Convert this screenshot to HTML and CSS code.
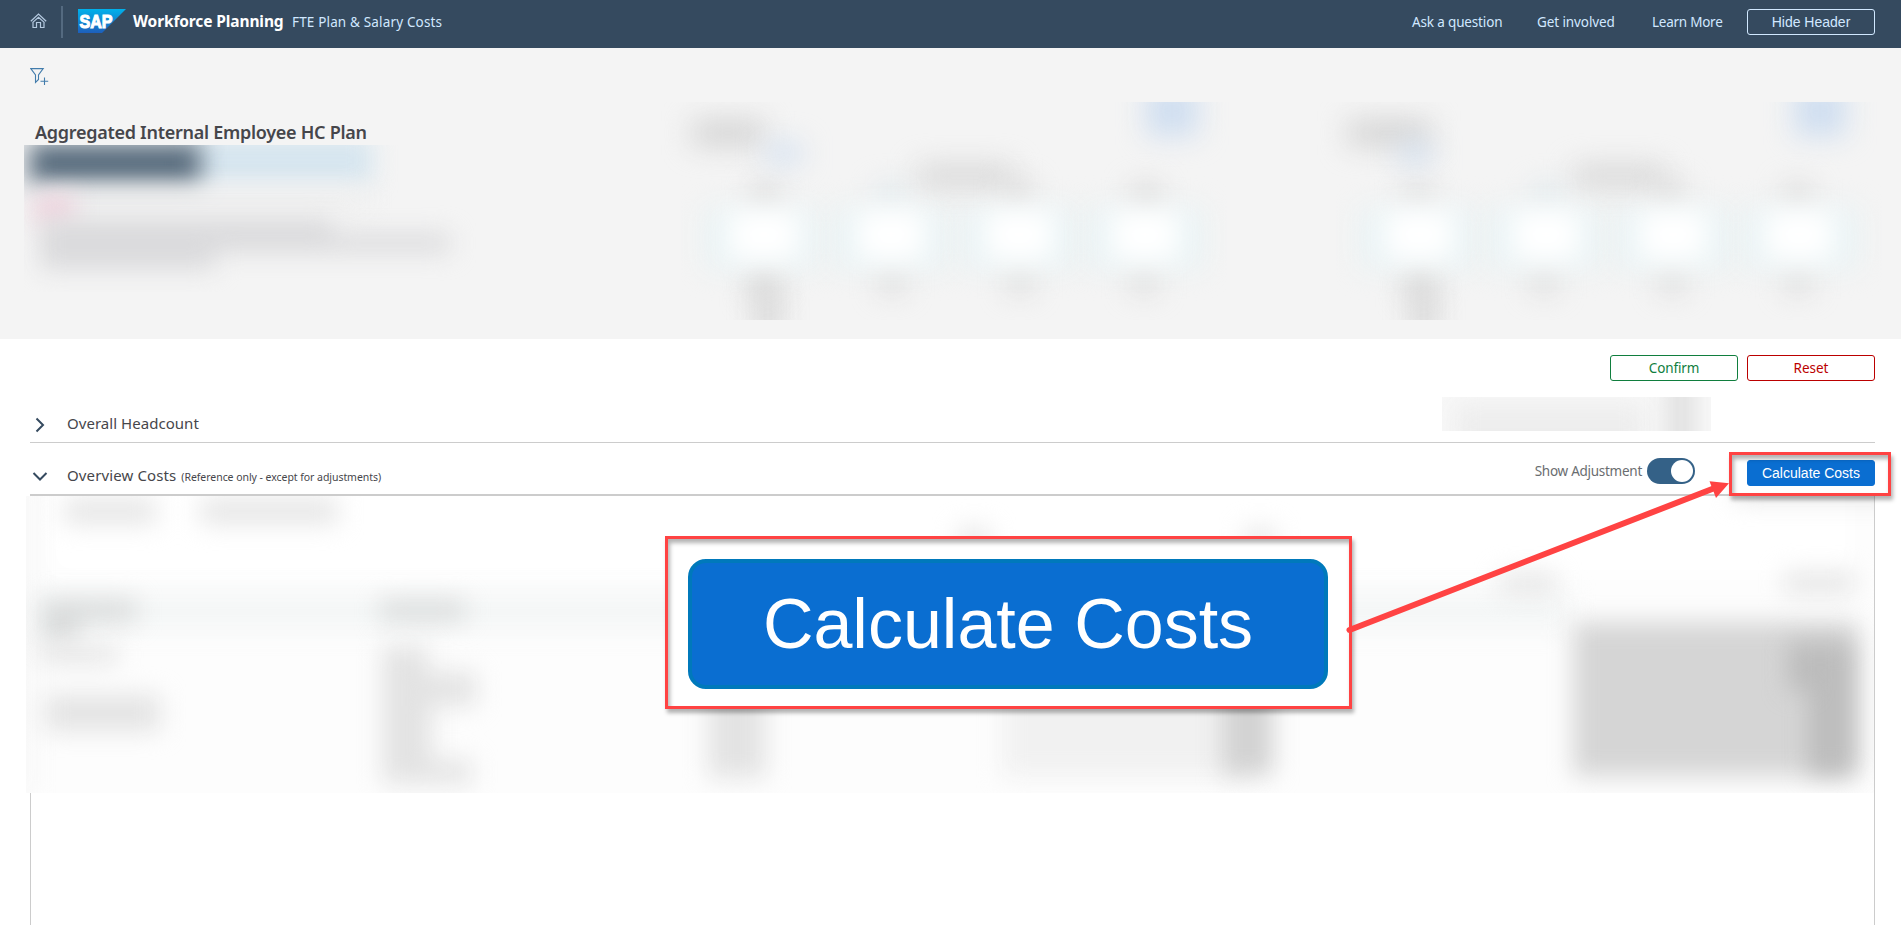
FILE: index.html
```html
<!DOCTYPE html>
<html lang="en">
<head>
<meta charset="utf-8">
<title>Workforce Planning</title>
<link rel="stylesheet" href="styles.css">
</head>
<body>
<header class="shell">
  <svg class="home" width="18" height="16" viewBox="0 0 18 16" fill="none" stroke="#b5cae0" stroke-width="1.2"><path d="M.8 8.200 8.500 1 16.200 8.200M2.500 9.600 8.500 4.300 14.500 9.600M3 9.500V14.500H6.500V9.500H10.500V14.500H14V9.500"/></svg>
  <span class="divider"></span>
  <svg class="logo" width="48" height="24" viewBox="0 0 48 24">
    <defs><linearGradient id="sap" x1="0" y1="0" x2="0" y2="1"><stop offset="0" stop-color="#00b1eb"/><stop offset="1" stop-color="#1e5fbb"/></linearGradient></defs>
    <path fill="url(#sap)" d="M0 0H48L24 24H0z"/>
    <text class="logo-text" x="1.500" y="19" textLength="33" lengthAdjust="spacingAndGlyphs">SAP</text>
  </svg>
  <span class="product">Workforce Planning</span>
  <span class="page-name">FTE Plan &amp; Salary Costs</span>
  <nav class="links">
    <a class="link ask">Ask a question</a>
    <a class="link involved">Get involved</a>
    <a class="link learn">Learn More</a>
    <button class="btn btn-header">Hide Header</button>
  </nav>
</header>

<section class="summary">
  <svg class="filter" width="20" height="18" viewBox="0 0 20 18" fill="none" stroke="#427cac" stroke-width="1.1"><path d="M.8.600H13.200L8.500 7V11.500L5.500 14.500V7zM14.500 9.500V17M10.500 13.300H18.200"/></svg>
  <h1 class="heading">Aggregated Internal Employee HC Plan</h1>
  <div class="tiles">
    <svg class="tile tile-text" width="460" height="147" viewBox="24 145 460 147">
      <g class="soft">
        <rect x="190" y="138" width="182" height="44" fill="#d5e5ef"/>
        <rect x="29" y="143" width="172" height="41" fill="#566a7c"/>
        <rect x="36" y="190" width="330" height="20" fill="#efefef"/>
        <rect x="34" y="198" width="40" height="24" fill="#f0cedb"/>
        <path d="M40 219H332V234H450V252H215V269H40z" fill="#dadadc"/>
      </g>
    </svg>
    <svg class="tile tile-b" width="600" height="218" viewBox="660 102 600 218">
      <g class="soft softer">
        <g fill="#e8f3f5"><rect x="706" y="208" width="112" height="60"/><rect x="834" y="208" width="112" height="60"/><rect x="962" y="208" width="112" height="60"/><rect x="1088" y="208" width="114" height="60"/></g>
        <g fill="#d4d4d4"><rect x="692" y="120" width="72" height="26"/><rect x="752" y="186" width="26" height="20"/><rect x="918" y="166" width="94" height="20"/><rect x="1004" y="184" width="28" height="16"/><rect x="1132" y="186" width="28" height="20"/><rect x="750" y="272" width="28" height="26"/><rect x="757" y="290" width="22" height="50"/><rect x="880" y="274" width="24" height="17"/><rect x="1008" y="274" width="24" height="17"/><rect x="1132" y="274" width="24" height="17"/></g>
        <g fill="#d8e5ea"><rect x="876" y="186" width="30" height="16"/></g>
        <g fill="#cfdef0"><rect x="766" y="144" width="36" height="18"/><rect x="1146" y="86" width="52" height="50"/></g>
        <g fill="#fff"><rect x="728" y="208" width="72" height="54"/><rect x="856" y="208" width="70" height="54"/><rect x="984" y="208" width="70" height="54"/><rect x="1110" y="208" width="70" height="54"/></g>
      </g>
    </svg>
    <svg class="tile tile-c" width="601" height="218" viewBox="1300 102 601 218">
      <g class="soft softer">
        <g fill="#e8f3f5"><rect x="1361" y="208" width="112" height="60"/><rect x="1489" y="208" width="112" height="60"/><rect x="1617" y="208" width="112" height="60"/><rect x="1743" y="208" width="114" height="60"/></g>
        <g fill="#d4d4d4"><rect x="1348" y="120" width="82" height="26"/><rect x="1405" y="186" width="26" height="16"/><rect x="1574" y="166" width="90" height="20"/><rect x="1656" y="184" width="28" height="16"/><rect x="1784" y="186" width="28" height="17"/><rect x="1406" y="272" width="28" height="26"/><rect x="1413" y="290" width="22" height="50"/><rect x="1532" y="274" width="24" height="17"/><rect x="1660" y="274" width="24" height="17"/><rect x="1786" y="274" width="24" height="17"/></g>
        <g fill="#d8e5ea"><rect x="1532" y="186" width="30" height="16"/></g>
        <g fill="#cfdef0"><rect x="1398" y="144" width="34" height="18"/><rect x="1794" y="86" width="52" height="50"/></g>
        <g fill="#fff"><rect x="1384" y="208" width="70" height="54"/><rect x="1511" y="208" width="70" height="54"/><rect x="1638" y="208" width="70" height="54"/><rect x="1764" y="208" width="70" height="54"/></g>
      </g>
    </svg>
  </div>
</section>

<main class="content">
  <div class="actions">
    <button class="btn btn-confirm">Confirm</button>
    <button class="btn btn-reset">Reset</button>
  </div>
  <div class="panel-head overall">
    <svg class="chevron" width="16" height="16" viewBox="0 0 16 16" fill="none" stroke="#354a5f" stroke-width="2"><path d="M4.500 1.500 11 8 4.500 14.500"/></svg>
    <span class="panel-title overall-title">Overall Headcount</span>
    <svg class="masked" width="269" height="34" viewBox="1442 397 269 34">
      <path fill="#f8f8f8" d="M1442 397h269v34h-269z"/>
      <g class="soft"><path fill="#ededed" d="M1455 404H1645V455H1455z"/><path fill="#dadada" d="M1670 370H1692V460H1670z"/></g>
    </svg>
  </div>
  <div class="panel-head costs">
    <svg class="chevron" width="16" height="16" viewBox="0 0 16 16" fill="none" stroke="#354a5f" stroke-width="2"><path d="M1.500 5 8 11.500 14.500 5"/></svg>
    <span class="panel-title costs-title">Overview Costs</span>
    <span class="panel-note">(Reference only - except for adjustments)</span>
    <span class="toggle-label">Show Adjustment</span>
    <span class="toggle"><span class="knob"></span></span>
    <button class="btn btn-calc">Calculate Costs</button>
  </div>
  <div class="panel-body">
    <svg class="table-mask" width="1848" height="297" viewBox="26 496 1848 297">
      <path fill="#fdfdfd" d="M26 496h1848v297H26z"/>
      <g class="soft">
        <path fill="#fff" d="M50 470H1850V575H50z"/>
        <path fill="#f4f6f6" d="M30 594H1570V630H30z"/>
        <path fill="#f6f6f6" d="M10 480H30V793H10z"/>
        <path fill="#e6e6e6" d="M64 498H156V524H64zM200 498H338V524H200zM958 528H990V550H958zM1245 528H1275V550H1245zM1500 573H1556V594H1500zM1784 572H1854V594H1784z"/>
        <path fill="#d8dada" d="M42 600H136V621H78V642H42zM380 601H465V620H380z"/>
        <path fill="#e3e3e3" d="M40 646H118V663H40zM45 695H160V731H45zM382 646H428V672H476V706H432V760H472V784H382zM708 600H766V778H708z"/>
        <path fill="#f1f1f1" d="M1002 640H1250V777H1002z"/>
        <path fill="#d2d2d2" d="M1222 640H1273V775H1222z"/>
        <path fill="#e3e3e3" d="M1735 480H1900V500H1735z"/>
        <path fill="#d5d5d5" d="M1573 622H1858V776H1573z"/>
        <path fill="#bcbcbc" d="M1788 642H1852V774H1808V690H1788z"/>
      </g>
    </svg>
  </div>
</main>

<div class="mark mark-small"></div>
<div class="mark mark-large"><span class="callout">Calculate Costs</span></div>
<svg class="arrow" width="390" height="160" viewBox="1345 478 390 160"><path d="M1349.500 630 1716 487.500" stroke="#ff4343" stroke-width="6" stroke-linecap="round"/><path d="M1729 483.300 1709.500 481.300 1716 498z" fill="#ff4343"/></svg>
</body>
</html>
```
FILE: styles.css
```css
* { box-sizing: border-box; }
body {
  margin: 0;
  width: 1901px;
  height: 925px;
  overflow: hidden;
  position: relative;
  display: flex;
  flex-direction: column;
  background: #fff;
  color: #46464b;
  font-family: "Noto Sans", "Liberation Sans", sans-serif;
  font-size: 14px;
}
svg { display: block; flex: none; }
span, a { white-space: nowrap; }
.soft rect, .soft path { filter: blur(12px); }
.softer rect { filter: blur(14px); }

.shell {
  height: 48px;
  flex: none;
  display: flex;
  align-items: flex-start;
  padding: 0 26px 0 30px;
  background: #354a5f;
  color: #d1e8ff;
}
.home { margin-top: 13px; }
.divider { width: 2px; height: 32px; margin: 6px 15px 0 13px; background: #546a80; }
.logo { margin-top: 9px; }
.logo-text { fill: #fff; font: bold 19px "Liberation Sans", sans-serif; stroke: #fff; stroke-width: 1.1px; }
.product { width: 151px; margin: 0 8px 0 7px; color: #fff; font-size: 15.500px; font-weight: 700; line-height: 43px; letter-spacing: -.12px; }
.page-name { font-size: 13.500px; line-height: 44px; letter-spacing: .16px; }
.links { margin-left: auto; display: flex; }
.link { font-size: 13.500px; line-height: 44px; letter-spacing: -.15px; }
.involved.link { letter-spacing: -.1px; }
.learn.link { letter-spacing: -.25px; }
.ask { width: 125px; }
.involved { width: 115px; }
.learn { width: 95px; }

.btn {
  width: 128px;
  height: 26px;
  padding: 0;
  border: 1px solid;
  border-radius: 3px;
  background: #fff;
  font: 13.500px "Noto Sans", sans-serif;
  line-height: 23px;
}
.btn-header { margin-top: 9px; background: none; color: #d1e8ff; font: 14px "Liberation Sans", sans-serif; }

.summary { height: 291px; flex: none; background: #f4f4f4; }
.filter { margin: 20px 0 0 30px; }
.heading { height: 59px; margin: 0 0 0 35px; padding-top: 33px; font-size: 18px; font-weight: 600; line-height: 26px; letter-spacing: -.28px; }
.tiles { display: flex; height: 147px; margin-left: 24px; align-items: flex-start; }
.tile { overflow: hidden; }
.tile-b { margin: -43px 40px 0 176px; }
.tile-c { margin-top: -43px; }

.content { flex: 1; padding: 16px 26px 0 30px; display: flex; flex-direction: column; }
.actions { display: flex; justify-content: flex-end; gap: 9px; height: 26px; }
.btn-confirm { color: #107e3e; letter-spacing: -.15px; }
.btn-reset { color: #b00; }
.panel-head { display: flex; align-items: flex-start; border-bottom: 1px solid #ccc; }
.overall { height: 62px; padding-top: 16px; }
.overall .chevron { margin-top: 20px; }
.chevron { margin-left: 2px; }
.panel-title { margin-left: 19px; font-size: 15px; line-height: 22px; letter-spacing: .04px; }
.overall-title { margin-top: 15px; }
.masked { margin: 0 164px 0 auto; overflow: hidden; }
.costs { height: 53px; padding-top: 15px; border-bottom-width: 2px; }
.costs .chevron { margin-top: 10px; }
.costs-title { margin-top: 6px; letter-spacing: .12px; }
.panel-note { margin: 9px 0 0 5px; font-size: 10.500px; line-height: 20px; letter-spacing: -.05px; }
.toggle-label { margin: 3px 5px 0 auto; color: #6a6d70; font-size: 13.500px; line-height: 20px; letter-spacing: -.27px; }
.toggle { width: 48px; height: 26px; margin-right: 52px; padding: 2px; border-radius: 13px; background: #346187; display: flex; justify-content: flex-end; }
.knob { width: 22px; height: 22px; border-radius: 50%; background: #fff; }
.btn-calc { margin-top: 2px; border-color: #0a6ed1; background: #0a6ed1; color: #fff; font: 14px "Liberation Sans", sans-serif; }
.panel-body { flex: 1; border: solid #ccc; border-width: 0 1px; }
.table-mask { margin-left: -5px; overflow: hidden; }

.mark { position: absolute; border: 3px solid #ff4343; box-shadow: 2px 4px 4px rgba(0,0,0,.3), inset 2px 4px 4px rgba(0,0,0,.3); }
.mark-small { left: 1729px; top: 452px; width: 162px; height: 44px; }
.mark-large { left: 665px; top: 536px; width: 687px; height: 173px; padding: 20px; background: #fff; }
.callout { display: block; width: 640px; height: 130px; border: 4px solid #0079bb; border-radius: 18px; background: #0a6ed1; color: #fff; font: 70px/122px "Liberation Sans", sans-serif; text-align: center; }
.arrow { position: absolute; left: 1345px; top: 478px; }
```
